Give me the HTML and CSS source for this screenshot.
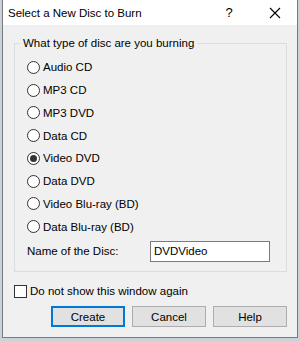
FILE: index.html
```html
<!DOCTYPE html>
<html lang="en">
<head>
  <meta charset="UTF-8" />
  <title>Select a New Disc to Burn</title>
  <link rel="stylesheet" href="styles.css">
</head>
<body>
  <div class="window">
    <div class="titlebar">
      <span class="title">Select a New Disc to Burn</span>
      <span class="help-btn">?</span>
      <span class="close-btn">
        <svg width="12" height="12" viewBox="0 0 12 12"><path d="M1 1L11 11M11 1L1 11" stroke="#000" stroke-width="1.1" fill="none"/></svg>
      </span>
    </div>

    <div class="content">
      <fieldset class="group">
        <legend>What type of disc are you burning</legend>

        <label class="option"><input type="radio" name="disc"> Audio CD</label>
        <label class="option"><input type="radio" name="disc"> MP3 CD</label>
        <label class="option"><input type="radio" name="disc"> MP3 DVD</label>
        <label class="option"><input type="radio" name="disc"> Data CD</label>
        <label class="option"><input type="radio" name="disc" checked> Video DVD</label>
        <label class="option"><input type="radio" name="disc"> Data DVD</label>
        <label class="option"><input type="radio" name="disc"> Video Blu-ray (BD)</label>
        <label class="option"><input type="radio" name="disc"> Data Blu-ray (BD)</label>

        <div class="name-row">
          <label for="discName">Name of the Disc:</label>
          <input type="text" id="discName" value="DVDVideo" />
        </div>
      </fieldset>

      <label class="check"><input type="checkbox"> Do not show this window again</label>

      <div class="button-group">
        <button type="button" class="default">Create</button>
        <button type="button">Cancel</button>
        <button type="button">Help</button>
      </div>
    </div>
  </div>
</body>
</html>
```

FILE: styles.css
```css
* {
  margin: 0;
  padding: 0;
  box-sizing: border-box;
}
body {
  width: 300px;
  height: 341px;
  background: #c9d1d9;
  font-family: 'Liberation Sans', Arial, sans-serif;
  font-size: 11.5px;
  color: #000;
  overflow: hidden;
}
.window {
  margin-left: 2px;
  width: 296px;
  height: 338px;
  background: #f0f0f0;
  border: 1px solid #7a7a7a;
  border-top: none;
  display: flex;
  flex-direction: column;
}
.titlebar {
  height: 25px;
  background: #fff;
  display: flex;
  align-items: center;
  padding-left: 5px;
}
.title {
  flex: 1;
  font-size: 11.5px;
}
.help-btn {
  width: 20px;
  text-align: center;
  font-size: 13px;
  margin-right: 26px;
}
.close-btn {
  width: 20px;
  margin-right: 12px;
  display: flex;
  justify-content: center;
}
.content {
  flex: 1;
  padding: 12px 0 0 11px;
}
.group {
  width: 273px;
  height: 235px;
  border: 1px solid #dcdcdc;
  padding: 7px 0 0 12px;
}
.group legend {
  margin-left: -7px;
  padding: 0 3px;
}
.option {
  display: flex;
  align-items: center;
  height: 22.75px;
}
.option input {
  appearance: none;
  width: 13px;
  height: 13px;
  border: 1px solid #333;
  border-radius: 50%;
  background: #fff;
  margin-right: 3px;
  position: relative;
}
.option input:checked::after {
  content: "";
  position: absolute;
  left: 2px;
  top: 2px;
  width: 7px;
  height: 7px;
  border-radius: 50%;
  background: #333;
}
.name-row {
  display: flex;
  align-items: center;
  height: 24px;
  margin-top: 1px;
}
.name-row label {
  width: 123px;
}
.name-row input {
  width: 120px;
  height: 21px;
  border: 1px solid #7a7a7a;
  background: #fff;
  font-family: inherit;
  font-size: 11.5px;
  padding: 0 3px;
  outline: none;
}
.check {
  display: flex;
  align-items: center;
  height: 16px;
  margin-top: 11px;
}
.check input {
  appearance: none;
  width: 13px;
  height: 13px;
  border: 1px solid #333;
  background: #fff;
  margin-right: 3px;
}
.button-group {
  display: flex;
  gap: 7px;
  margin-top: 7px;
  padding-left: 37px;
}
button {
  width: 74px;
  height: 21px;
  background: #e1e1e1;
  border: 1px solid #adadad;
  font-family: inherit;
  font-size: 11.5px;
  color: #000;
}
button.default {
  border: 2px solid #0078d7;
}
```
